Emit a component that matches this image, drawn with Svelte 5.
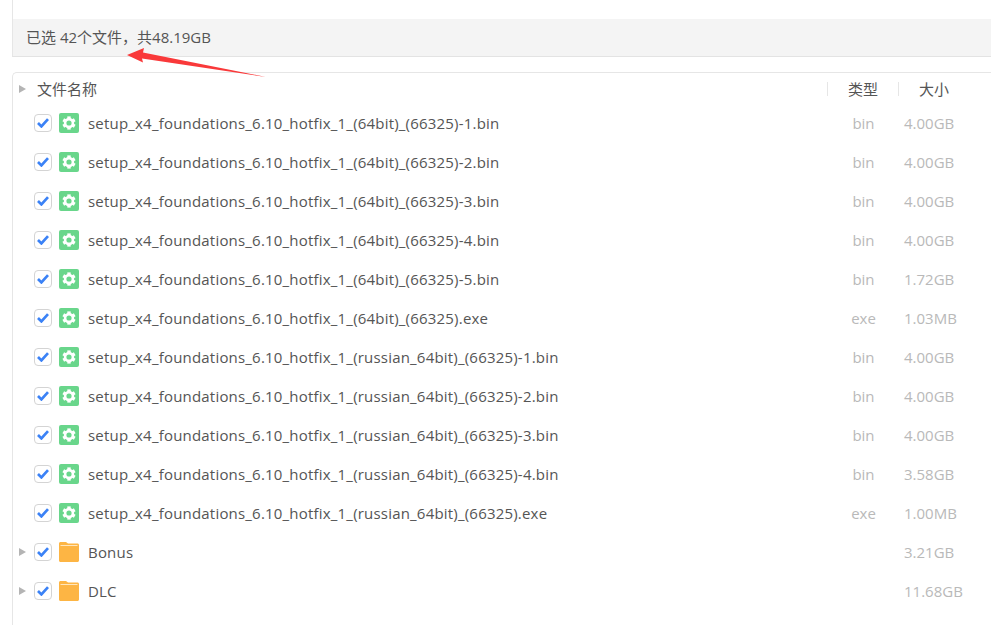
<script>
  const base = 'setup_x4_foundations_6.10_hotfix_1_';
  const files = [
    { name: base + '(64bit)_(66325)-1.bin', type: 'bin', size: '4.00GB' },
    { name: base + '(64bit)_(66325)-2.bin', type: 'bin', size: '4.00GB' },
    { name: base + '(64bit)_(66325)-3.bin', type: 'bin', size: '4.00GB' },
    { name: base + '(64bit)_(66325)-4.bin', type: 'bin', size: '4.00GB' },
    { name: base + '(64bit)_(66325)-5.bin', type: 'bin', size: '1.72GB' },
    { name: base + '(64bit)_(66325).exe', type: 'exe', size: '1.03MB' },
    { name: base + '(russian_64bit)_(66325)-1.bin', type: 'bin', size: '4.00GB' },
    { name: base + '(russian_64bit)_(66325)-2.bin', type: 'bin', size: '4.00GB' },
    { name: base + '(russian_64bit)_(66325)-3.bin', type: 'bin', size: '4.00GB' },
    { name: base + '(russian_64bit)_(66325)-4.bin', type: 'bin', size: '3.58GB' },
    { name: base + '(russian_64bit)_(66325).exe', type: 'exe', size: '1.00MB' },
    { name: 'Bonus', folder: true, size: '3.21GB' },
    { name: 'DLC', folder: true, size: '11.68GB' }
  ];
  const teeth = [0, 60, 120, 180, 240, 300];
</script>

<div class="page">
  <div class="top">
    <div class="blank"></div>
    <div class="summary">已选 42个文件，共48.19GB</div>
  </div>

  <div class="list">
    <div class="row head">
      <span class="caret"></span>
      <span class="title">文件名称</span>
      <span class="col type">类型</span>
      <span class="col size">大小</span>
    </div>

    {#each files as file}
      <div class="row">
        {#if file.folder}
          <span class="caret"></span>
        {:else}
          <span class="caret none"></span>
        {/if}
        <span class="check">
          <svg width="12" height="10" viewBox="0 0 12 10">
            <path d="M1 5 4.400 8.400 11 1.200" fill="none" stroke="#3b82f6" stroke-width="2.700" />
          </svg>
        </span>
        {#if file.folder}
          <svg class="icon" width="20" height="20" viewBox="0 0 20 20">
            <path d="M0 1.500C0 .7.7 0 1.500 0H7L9 1.500H18.500C19.300 1.500 20 2.200 20 3V18.500C20 19.300 19.300 20 18.500 20H1.500C.7 20 0 19.300 0 18.500Z" fill="#fdb544" />
            <rect x="1.500" y="3" width="17" height="1" fill="#ffe6bd" />
          </svg>
        {:else}
          <svg class="icon" width="20" height="20" viewBox="0 0 20 20">
            <rect width="20" height="20" rx="2" fill="#69d68b" />
            <circle cx="10" cy="10" r="3.900" fill="none" stroke="#fff" stroke-width="2.600" />
            {#each teeth as angle}
              <rect x="8.300" y="3.400" width="3.400" height="3" fill="#fff" transform="rotate({angle} 10 10)" />
            {/each}
          </svg>
        {/if}
        <span class="name">{file.name}</span>
        <span class="col type light">{file.type ?? ''}</span>
        <span class="col size light">{file.size}</span>
      </div>
    {/each}
  </div>

  <svg class="arrow" width="140" height="32" viewBox="0 0 140 32">
    <path d="M0 7 17 0 16 4.500 139 29 15 10.500 16 14.500Z" fill="#f9393a" />
  </svg>
</div>

<style>
  :global(body) {
    background: #fff;
    overflow: hidden;
  }

  .page {
    position: relative;
    width: 991px;
    height: 625px;
    overflow: hidden;
    padding-left: 12px;
    box-sizing: border-box;
    font-family: "Open Sans", "Noto Sans CJK SC", sans-serif;
    font-size: 15px;
    color: #555;
  }

  .top {
    border-left: 1px solid #e6e6e6;
    border-bottom: 1px solid #e3e3e3;
  }

  .blank {
    height: 19px;
  }

  .summary {
    height: 37px;
    line-height: 37px;
    padding-left: 13px;
    background: #f4f4f4;
    font-size: 15px;
  }

  .list {
    margin-top: 15px;
    border: 1px solid #e6e6e6;
    border-right: 0;
    border-bottom: 0;
    border-top-left-radius: 5px;
    height: 560px;
  }

  .row {
    display: flex;
    align-items: center;
    height: 38px;
    margin-bottom: 1px;
  }

  .head {
    height: 31px;
    margin-bottom: 0;
  }

  .caret {
    width: 0;
    height: 0;
    margin-left: 6px;
    border-left: 7px solid #b4b4b4;
    border-top: 4.500px solid transparent;
    border-bottom: 4.500px solid transparent;
    flex: none;
  }

  .caret.none {
    visibility: hidden;
  }

  .title {
    margin-left: 11px;
    flex: 1;
  }

  .check {
    display: flex;
    align-items: center;
    justify-content: center;
    box-sizing: border-box;
    width: 18px;
    height: 18px;
    margin-left: 8px;
    border: 1px solid #d4d4d4;
    border-radius: 4px;
    background: #fff;
    flex: none;
  }

  .icon {
    margin-left: 7px;
    flex: none;
  }

  .name {
    margin-left: 9px;
    flex: 1;
    white-space: nowrap;
    letter-spacing: 0.2px;
  }

  .col {
    flex: none;
    box-sizing: border-box;
  }

  .type {
    width: 71px;
    text-align: center;
  }

  .size {
    width: 92px;
    padding-left: 5px;
  }

  .head .type {
    margin-left: -1px;
  }

  .head .size {
    padding-left: 20px;
    margin-right: 1px;
  }

  .head .col {
    border-left: 1px solid #e6e6e6;
    line-height: 14px;
  }

  .light {
    color: #b9b9b9;
  }

  .arrow {
    position: absolute;
    left: 127px;
    top: 48px;
  }
</style>
